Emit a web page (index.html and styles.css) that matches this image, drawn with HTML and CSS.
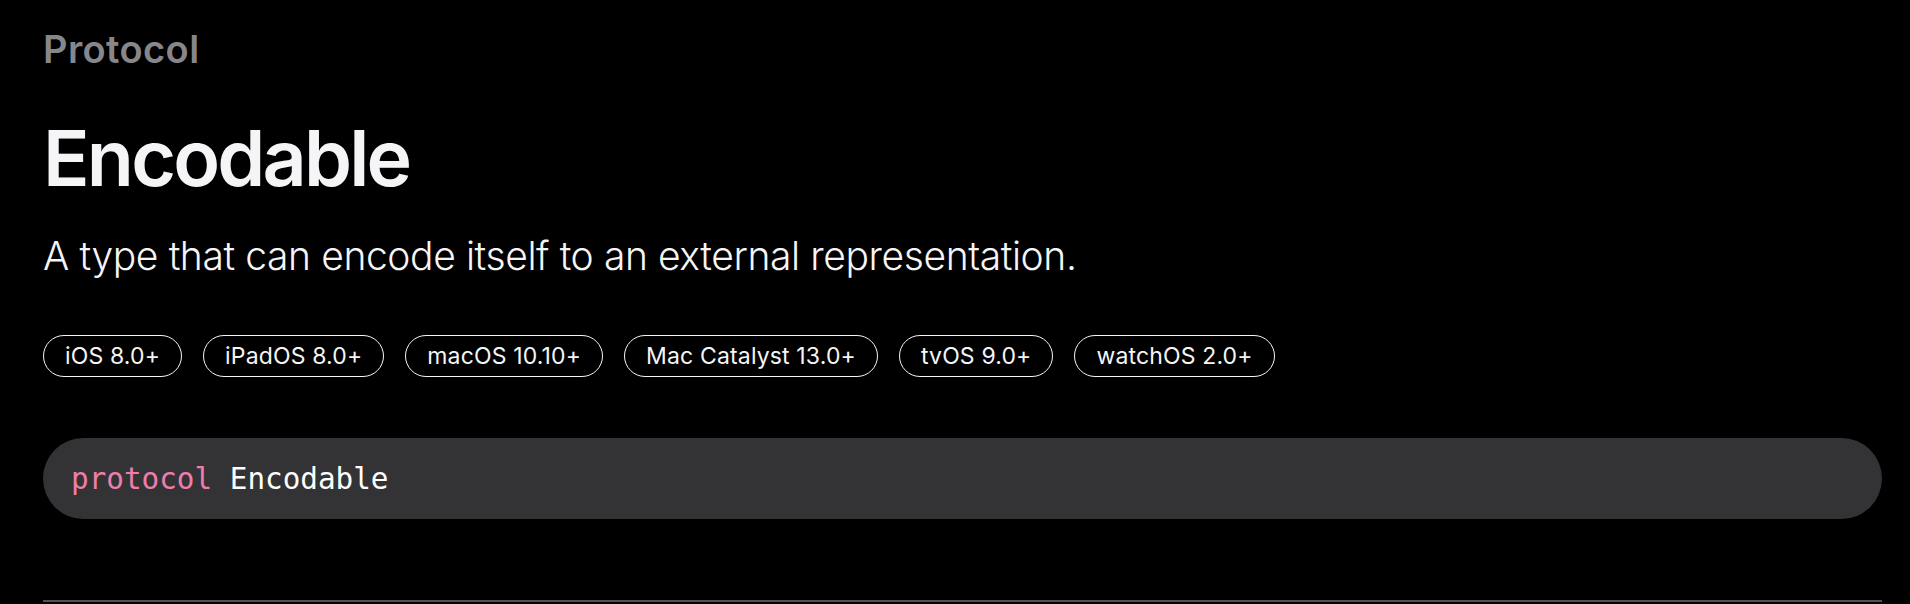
FILE: index.html
```html
<!DOCTYPE html>
<html lang="en">
<head>
<meta charset="utf-8">
<title>Encodable</title>
<link rel="stylesheet" href="styles.css">
</head>
<body>
<main class="page">
  <div class="eyebrow">Protocol</div>
  <h1 class="title">Encodable</h1>
  <p class="abstract">A type that can encode itself to an external representation.</p>
  <ul class="platforms">
    <li class="badge">iOS 8.0+</li>
    <li class="badge">iPadOS 8.0+</li>
    <li class="badge">macOS 10.10+</li>
    <li class="badge">Mac Catalyst 13.0+</li>
    <li class="badge">tvOS 9.0+</li>
    <li class="badge">watchOS 2.0+</li>
  </ul>
  <pre class="declaration"><code><span class="kw">protocol</span> Encodable</code></pre>
  <hr class="divider">
</main>
</body>
</html>
```

FILE: styles.css
```css
html, body {
  margin: 0;
  padding: 0;
  background: #000;
}
body {
  font-family: Inter, "Noto Sans", sans-serif;
  color: #f5f5f7;
  height: 604px;
  overflow: hidden;
}
.page {
  padding: 26px 28px 0 43px;
}
.eyebrow {
  font-size: 38px;
  line-height: 46px;
  font-weight: 600;
  color: #86868b;
  letter-spacing: 0.4px;
}
.title {
  margin: 44px 0 0;
  font-size: 77px;
  line-height: 84px;
  font-weight: 600;
  letter-spacing: -2.8px;
  color: #f5f5f7;
}
.abstract {
  margin: 32px 0 0;
  font-size: 39px;
  line-height: 48px;
  font-weight: 300;
  color: #f5f5f7;
  letter-spacing: -0.4px;
}
.platforms {
  list-style: none;
  margin: 55px 0 0;
  padding: 0;
  display: flex;
  gap: 21px;
}
.badge {
  box-sizing: border-box;
  height: 42px;
  padding: 0 21px;
  border: 1.5px solid #f5f5f7;
  border-radius: 21px;
  display: flex;
  align-items: center;
  font-size: 23px;
  font-weight: 400;
  color: #f5f5f7;
  letter-spacing: 0.15px;
}
.declaration {
  margin: 61px 0 0;
  box-sizing: border-box;
  height: 81px;
  padding: 0 28px;
  background: #333336;
  border-radius: 41px;
  display: flex;
  align-items: center;
  font-family: "DejaVu Sans Mono", "Liberation Mono", monospace;
  font-size: 29.3px;
  color: #fff;
}
.declaration code {
  font-family: inherit;
}
.kw {
  color: #ee7eac;
}
.divider {
  margin: 81px 0 0;
  border: 0;
  height: 2px;
  background: #525255;
}
```
